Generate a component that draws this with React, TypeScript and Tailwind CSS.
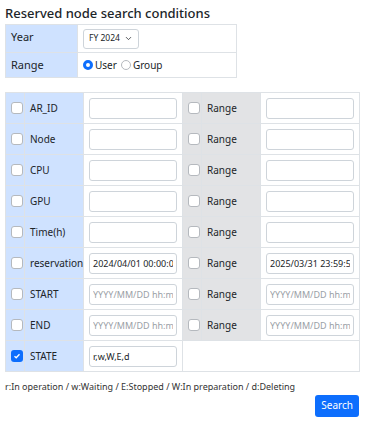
import { ChevronDown } from "lucide-react";

const rows = [
  { label: "AR_ID", left: "", right: "", ph: "" },
  { label: "Node", left: "", right: "", ph: "" },
  { label: "CPU", left: "", right: "", ph: "" },
  { label: "GPU", left: "", right: "", ph: "" },
  { label: "Time(h)", left: "", right: "", ph: "" },
  { label: "reservation", left: "2024/04/01 00:00:00", right: "2025/03/31 23:59:59", ph: "" },
  { label: "START", left: "", right: "", ph: "YYYY/MM/DD hh:mm" },
  { label: "END", left: "", right: "", ph: "YYYY/MM/DD hh:mm" },
];

function Box({ checked = false }: { checked?: boolean }) {
  if (checked) {
    return (
      <span className="flex h-[12px] w-[12px] items-center justify-center rounded-[3px] bg-[#0d6efd]">
        <svg width="8" height="8" viewBox="0 0 8 8" fill="none">
          <path d="M1.5 4.2 3.2 5.8 6.5 2.2" stroke="white" strokeWidth="1.3" />
        </svg>
      </span>
    );
  }
  return <span className="block h-[12px] w-[12px] rounded-[3px] border border-[#b5b9be] bg-white" />;
}

function Field({ value, ph }: { value: string; ph: string }) {
  return (
    <input
      type="text"
      readOnly
      value={value}
      placeholder={ph}
      className="h-[21px] w-full rounded-[3px] border border-[#ced4da] bg-white px-[3px] text-[9px] text-[#212529] outline-none placeholder:text-[#9aa0a6]"
    />
  );
}

export default function App() {
  return (
    <div className="min-h-screen bg-white px-[5px] pt-[4px] text-[#212529]" style={{ fontFamily: '"Noto Sans", "Open Sans", sans-serif' }}>
      <h2 className="text-[13px] font-medium leading-[18px]">Reserved node search conditions</h2>

      <table className="mt-[2px] w-[232px] border-collapse text-[11px]">
        <tbody>
          <tr className="h-[28px]">
            <td className="w-[72px] border border-[#dee2e6] bg-[#cfe2ff] px-[5px] align-top pt-[4px]">Year</td>
            <td className="border border-[#dee2e6] px-[5px]">
              <div className="flex h-[20px] w-[56px] items-center justify-between whitespace-nowrap rounded-[3px] border border-[#ced4da] px-[5px] text-[8.5px]">
                <span>FY 2024</span>
                <ChevronDown size={9} strokeWidth={2} />
              </div>
            </td>
          </tr>
          <tr className="h-[25px]">
            <td className="border border-[#dee2e6] bg-[#cfe2ff] px-[5px]">Range</td>
            <td className="border border-[#dee2e6] px-[5px]">
              <div className="flex items-center gap-[2px] text-[10px]">
                <span className="block h-[10px] w-[10px] rounded-full border-[3px] border-[#0d6efd] bg-white" />
                <span className="mr-[2px] text-[#212529]">User</span>
                <span className="block h-[10px] w-[10px] rounded-full border border-[#b5b9be] bg-white" />
                <span className="text-[#212529]">Group</span>
              </div>
            </td>
          </tr>
        </tbody>
      </table>

      <table className="mt-[14px] w-[354px] table-fixed border-collapse text-[10px]">
        <colgroup>
          <col className="w-[19px]" />
          <col className="w-[59px]" />
          <col className="w-[99px]" />
          <col className="w-[19px]" />
          <col className="w-[59px]" />
          <col className="w-[99px]" />
        </colgroup>
        <tbody>
          {rows.map((r) => (
            <tr key={r.label} className="h-[31px]">
              <td className="border border-[#dee2e6] bg-[#cfe2ff] pl-[5px]"><Box /></td>
              <td className="border border-[#dee2e6] bg-[#cfe2ff] pl-[5px]">{r.label}</td>
              <td className="border border-[#dee2e6] pl-[5px] pr-[5px]"><Field value={r.left} ph={r.ph} /></td>
              <td className="border border-[#dee2e6] bg-[#e2e3e5] pl-[5px]"><Box /></td>
              <td className="border border-[#dee2e6] bg-[#e2e3e5] pl-[5px]">Range</td>
              <td className="border border-[#dee2e6] pl-[5px] pr-[5px]"><Field value={r.right} ph={r.ph} /></td>
            </tr>
          ))}
          <tr className="h-[31px]">
            <td className="border border-[#dee2e6] bg-[#cfe2ff] pl-[5px]"><Box checked /></td>
            <td className="border border-[#dee2e6] bg-[#cfe2ff] pl-[5px]">STATE</td>
            <td className="border border-[#dee2e6] pl-[5px] pr-[5px]"><Field value="r,w,W,E,d" ph="" /></td>
            <td colSpan={3} className="border border-[#dee2e6]"></td>
          </tr>
        </tbody>
      </table>

      <p className="mt-[8px] text-[9px] text-[#333]">r:In operation / w:Waiting / E:Stopped / W:In preparation / d:Deleting</p>

      <div className="mt-[1px] flex w-[354px] justify-end">
        <button className="h-[22px] rounded-[3px] bg-[#0d6efd] px-[6px] text-[10px] text-white">Search</button>
      </div>
    </div>
  );
}
